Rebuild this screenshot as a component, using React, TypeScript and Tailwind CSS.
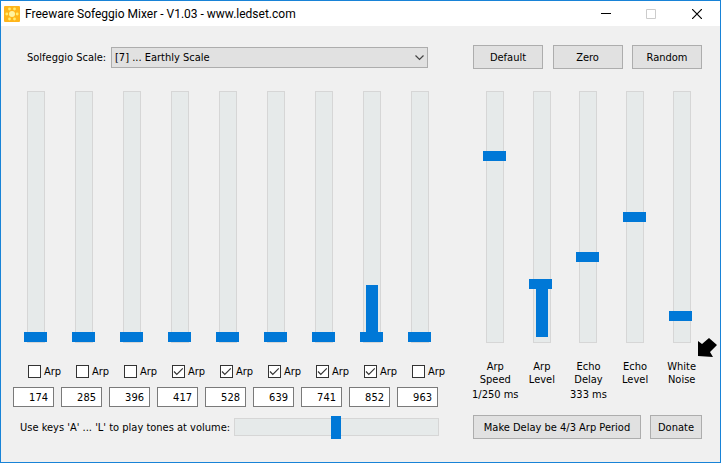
import { useState } from 'react';

const tones = [
  { hz: '174', arp: false, meter: 0 },
  { hz: '285', arp: false, meter: 0 },
  { hz: '396', arp: false, meter: 0 },
  { hz: '417', arp: true, meter: 0 },
  { hz: '528', arp: true, meter: 0 },
  { hz: '639', arp: true, meter: 0 },
  { hz: '741', arp: true, meter: 0 },
  { hz: '852', arp: true, meter: 52 },
  { hz: '963', arp: false, meter: 0 },
];

const effects = [
  { id: 'arp-speed', name: 'Arp Speed', note: '1/250 ms', value: 181, meter: 0 },
  { id: 'arp-level', name: 'Arp Level', note: '', value: 53, meter: 53 },
  { id: 'echo-delay', name: 'Echo Delay', note: '333 ms', value: 80, meter: 0 },
  { id: 'echo-level', name: 'Echo Level', note: '', value: 120, meter: 0 },
  { id: 'white-noise', name: 'White Noise', note: '', value: 21, meter: 0 },
];

const labelFont = "font-['DejaVu_Sans_Condensed','Open_Sans',sans-serif]";

function Fader({ id, label, start, meter }: { id: string; label: string; start: number; meter: number }) {
  const [value, setValue] = useState(start);
  return (
    <div className="relative flex w-[18px]">
      <input
        id={id}
        type="range"
        min={0}
        max={240}
        value={value}
        aria-label={label}
        onChange={(e) => setValue(Number(e.target.value))}
        className="m-0 h-[252px] w-[18px] appearance-none border border-[#d6d6d6] bg-[#e6eaea] [direction:rtl] [writing-mode:vertical-lr] [&::-webkit-slider-thumb]:-ml-[2px] [&::-webkit-slider-thumb]:h-[10px] [&::-webkit-slider-thumb]:w-[23px] [&::-webkit-slider-thumb]:appearance-none [&::-webkit-slider-thumb]:bg-[#0078d7]"
      />
      {meter > 0 && <div className="absolute bottom-[6px] left-[3px] w-3 bg-[#0078d7]" style={{ height: meter }} />}
    </div>
  );
}

function PushButton({ children, className }: { children: string; className: string }) {
  return (
    <button type="button" className={`h-6 border border-[#adadad] bg-[#e1e1e1] whitespace-nowrap ${className}`}>
      {children}
    </button>
  );
}

function Tone({ hz, arp, meter }: { hz: string; arp: boolean; meter: number }) {
  const [on, setOn] = useState(arp);
  return (
    <div className="flex flex-col items-center">
      <Fader id={`level-${hz}`} label={`${hz} Hz level`} start={0} meter={meter} />
      <label className="mt-5 flex h-4 items-center gap-[3px] self-start pl-4">
        <span className="relative flex size-[13px]">
          <input
            type="checkbox"
            checked={on}
            onChange={(e) => setOn(e.target.checked)}
            className="size-[13px] appearance-none border border-[#333] bg-white"
          />
          {on && (
            <svg viewBox="0 0 13 13" className="pointer-events-none absolute inset-0 size-[13px]" fill="none" stroke="#333" strokeWidth="1.2">
              <path d="M2 6.500 4.800 9.300l6-6" />
            </svg>
          )}
        </span>
        Arp
      </label>
      <input
        type="text"
        defaultValue={hz}
        aria-label="Frequency"
        className="mt-2 ml-px h-5 w-[41px] self-start border border-[#7a7a7a] bg-white pr-[5px] text-right"
      />
    </div>
  );
}

export default function App() {
  const [volume, setVolume] = useState(96);
  return (
    <div className={`border border-[#1883d7] bg-[#f0f0f0] text-[11px] leading-[13px] text-black ${labelFont}`}>
      <header className="flex h-[25px] items-center bg-white pl-[3px]">
        <svg viewBox="0 0 16 16" className="size-4">
          <rect width="16" height="16" rx="1" fill="#ffb51a" />
          <circle cx="8" cy="8" r="3" fill="#fff3a0" />
          <g fill="#ffee70">
            <circle cx="5.500" cy="3" r="1.400" />
            <circle cx="10.500" cy="3" r="1.400" />
            <circle cx="2.800" cy="8" r="1.400" />
            <circle cx="13.200" cy="8" r="1.400" />
            <circle cx="5.500" cy="13" r="1.400" />
            <circle cx="10.500" cy="13" r="1.400" />
          </g>
        </svg>
        <h1 className="ml-[5px] flex-1 font-['Roboto',sans-serif] text-[12px] leading-4">Freeware Sofeggio Mixer - V1.03 - www.ledset.com</h1>
        <button type="button" aria-label="Minimize" className="flex h-full w-[45px] items-center justify-center">
          <svg viewBox="0 0 10 10" className="size-[10px]"><path d="M0 4.500h10" stroke="#000" /></svg>
        </button>
        <button type="button" aria-label="Maximize" disabled className="flex h-full w-[45px] items-center justify-center">
          <svg viewBox="0 0 10 10" className="size-[10px]"><path d="M.5.5h9v9h-9z" fill="none" stroke="#ccc" /></svg>
        </button>
        <button type="button" aria-label="Close" className="flex h-full w-[47px] items-center justify-center">
          <svg viewBox="0 0 10 10" className="size-[10px]"><path d="M0 0l10 10M10 0L0 10" stroke="#000" strokeWidth="1.200" /></svg>
        </button>
      </header>

      <main className="flex justify-between gap-[27px] pt-[19px] pr-4 pb-[23px] pl-[11px]">
        <section className="flex flex-1 flex-col">
          <div className="flex h-6 items-center gap-2 pr-4 pl-[15px]">
            <label htmlFor="scale" className="w-19 whitespace-nowrap">Solfeggio Scale:</label>
            <div className="relative flex flex-1">
              <select id="scale" className="h-[21px] w-full appearance-none border border-[#adadad] bg-[#e1e1e1] pl-[3px]">
                <option>[7] ... Earthly Scale</option>
              </select>
              <svg viewBox="0 0 9 6" className="pointer-events-none absolute top-2 right-1 h-[6px] w-[9px]" fill="none" stroke="#444" strokeWidth="1.200">
                <path d="M.5.5l4 4 4-4" />
              </svg>
            </div>
          </div>
          <div className="mt-[22px] grid grid-cols-9">
            {tones.map((t) => <Tone key={t.hz} {...t} />)}
          </div>
          <div className="mt-2 flex h-6 items-center gap-2 pr-[5px] pl-2">
            <label htmlFor="volume" className="w-[206px] whitespace-nowrap">Use keys 'A' ... 'L' to play tones at volume:</label>
            <input
              id="volume"
              type="range"
              min={0}
              max={193}
              value={volume}
              onChange={(e) => setVolume(Number(e.target.value))}
              className="m-0 h-[18px] min-w-0 flex-1 appearance-none border border-[#d6d6d6] bg-[#e6eaea] [&::-webkit-slider-thumb]:h-[23px] [&::-webkit-slider-thumb]:w-[10px] [&::-webkit-slider-thumb]:appearance-none [&::-webkit-slider-thumb]:bg-[#0078d7]"
            />
          </div>
        </section>

        <section className="flex w-[233px] flex-col">
          <div className="flex justify-between px-[2px]">
            <PushButton className="w-[70px]">Default</PushButton>
            <PushButton className="w-[70px]">Zero</PushButton>
            <PushButton className="w-[70px]">Random</PushButton>
          </div>
          <div className="-mr-px mt-[22px] ml-px grid flex-1 grid-cols-5">
            {effects.map((f) => (
              <div key={f.id} className="relative flex flex-col items-center">
                <Fader id={f.id} label={f.name} start={f.value} meter={f.meter} />
                <label htmlFor={f.id} className="mt-[17px] w-min text-center">{f.name}</label>
                {f.note && <output className="mt-[2px] whitespace-nowrap">{f.note}</output>}
                {f.id === 'white-noise' && (
                  <svg viewBox="0 0 19 19" className="absolute top-[247px] left-10 size-[19px]">
                    <path d="M0 18V3l4 3 7-6 8 7-7 7 3 5z" />
                  </svg>
                )}
              </div>
            ))}
          </div>
          <div className="flex gap-[9px] px-[2px]">
            <PushButton className="flex-1">Make Delay be 4/3 Arp Period</PushButton>
            <PushButton className="w-[52px]">Donate</PushButton>
          </div>
        </section>
      </main>
    </div>
  );
}
